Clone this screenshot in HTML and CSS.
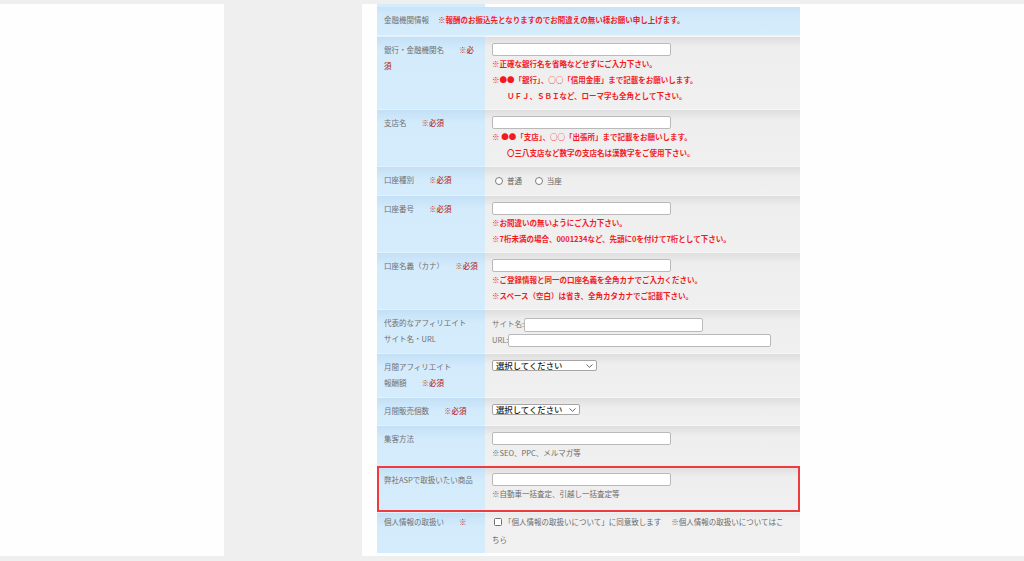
FILE: index.html
```html
<!DOCTYPE html>
<html lang="ja">
<head>
<meta charset="utf-8">
<title>金融機関情報</title>
<link rel="stylesheet" href="styles.css">
</head>
<body>
<div class="page">
  <aside class="side"></aside>
  <div class="gutter"></div>
  <main class="main">
    <div class="form">
      <div class="row row--stub"><div class="lbl"></div><div class="val val--blank"></div></div>

      <div class="row row--head">
        <span class="head-title">金融機関情報</span><span class="warn">※報酬のお振込先となりますのでお間違えの無い様お願い申し上げます。</span>
      </div>

      <div class="row">
        <div class="lbl">銀行・金融機関名　　<span class="req">※必須</span></div>
        <div class="val">
          <input class="txt" type="text">
          <p class="warn">※正確な銀行名を省略などせずにご入力下さい。</p>
          <p class="warn">※●●「銀行」、○○「信用金庫」まで記載をお願いします。</p>
          <p class="warn">　　ＵＦＪ、ＳＢＩなど、ローマ字も全角として下さい。</p>
        </div>
      </div>

      <div class="row">
        <div class="lbl">支店名　　<span class="req">※必須</span></div>
        <div class="val">
          <input class="txt" type="text">
          <p class="warn">※ ●●「支店」、○○「出張所」まで記載をお願いします。</p>
          <p class="warn">　　〇三八支店など数字の支店名は漢数字をご使用下さい。</p>
        </div>
      </div>

      <div class="row">
        <div class="lbl">口座種別　　<span class="req">※必須</span></div>
        <div class="val">
          <label class="opt"><input class="radio" type="radio" name="kind">普通</label>
          <label class="opt"><input class="radio" type="radio" name="kind">当座</label>
        </div>
      </div>

      <div class="row">
        <div class="lbl">口座番号　　<span class="req">※必須</span></div>
        <div class="val">
          <input class="txt" type="text">
          <p class="warn">※お間違いの無いようにご入力下さい。</p>
          <p class="warn">※7桁未満の場合、0001234など、先頭に0を付けて7桁として下さい。</p>
        </div>
      </div>

      <div class="row">
        <div class="lbl">口座名義（カナ）　　<span class="req">※必須</span></div>
        <div class="val">
          <input class="txt" type="text">
          <p class="warn">※ご登録情報と同一の口座名義を全角カナでご入力ください。</p>
          <p class="warn">※スペース（空白）は省き、全角カタカナでご記載下さい。</p>
        </div>
      </div>

      <div class="row">
        <div class="lbl">代表的なアフィリエイト<br>サイト名・URL</div>
        <div class="val">
          <p class="field">サイト名:<input class="txt txt--inline" type="text"></p>
          <p class="field">URL:<input class="txt txt--inline txt--url" type="text"></p>
        </div>
      </div>

      <div class="row">
        <div class="lbl">月間アフィリエイト<br>報酬額　　<span class="req">※必須</span></div>
        <div class="val">
          <span class="sel sel--wide"><select><option>選択してください</option></select><svg class="chev" viewBox="0 0 7 4" width="7" height="4"><polyline points="0.5,0.5 3.5,3.3 6.5,0.5" fill="none" stroke="#555" stroke-width="0.9"/></svg></span>
        </div>
      </div>

      <div class="row">
        <div class="lbl">月間販売個数　　<span class="req">※必須</span></div>
        <div class="val">
          <span class="sel sel--narrow"><select><option>選択してください</option></select><svg class="chev" viewBox="0 0 7 4" width="7" height="4"><polyline points="0.5,0.5 3.5,3.3 6.5,0.5" fill="none" stroke="#555" stroke-width="0.9"/></svg></span>
        </div>
      </div>

      <div class="row">
        <div class="lbl">集客方法</div>
        <div class="val">
          <input class="txt" type="text">
          <p class="note">※SEO、PPC、メルマガ等</p>
        </div>
      </div>

      <div class="row row--mark">
        <div class="lbl">弊社ASPで取扱いたい商品</div>
        <div class="val">
          <input class="txt" type="text">
          <p class="note">※自動車一括査定、引越し一括査定等</p>
        </div>
      </div>

      <div class="row row--agree">
        <div class="lbl">個人情報の取扱い　　<span class="req">※</span></div>
        <div class="val">
          <label class="agree"><input class="check" type="checkbox">「個人情報の取扱いについて」に同意致します<span class="gap"></span>※個人情報の取扱いについてはこちら</label>
        </div>
      </div>
    </div>
  </main>
</div>
</body>
</html>
```

FILE: styles.css
```css
html, body {
  margin: 0;
  padding: 0;
}

body {
  background: #efefef;
  font-family: "Noto Sans CJK JP", "Noto Sans", sans-serif;
  font-size: 7.5px;
  color: #666;
}

.page {
  display: flex;
  margin-top: 4px;
  height: 552px;
}

.side {
  width: 224px;
  background: #fefefe;
}

.gutter {
  width: 138px;
  background: #efefef;
}

.main {
  flex: 1;
  background: #fefefe;
  padding-left: 15px;
  overflow: hidden;
}

.form {
  width: 423px;
  display: flex;
  flex-direction: column;
}

.row {
  display: flex;
}

.lbl {
  width: 108px;
  box-sizing: border-box;
  flex: none;
  padding: 5px 7px 6px 7px;
  line-height: 16px;
  color: #707070;
  background: linear-gradient(#c4e0f6, #d4ebfc 14px, #d5ecfc);
  border-top: 1px solid #e2f1fd;
}

.val {
  flex: 1;
  min-width: 0;
  padding: 6px 10px 5px 7px;
  line-height: 16px;
  background: linear-gradient(#dedede, #eeeeee 10px, #f0f0f0);
  border-top: 1px solid #f6f6f6;
}

.row--stub .lbl,
.row--stub .val {
  height: 3px;
  padding: 0;
  border: 0;
}

.row--stub .lbl {
  background: #d5ecfc;
}

.val--blank {
  background: #fefefe;
}

.row--head {
  display: block;
  padding: 5px 7px 7px;
  line-height: 16px;
  background: linear-gradient(#c8e3f7, #d3eafb 10px, #d5ecfc);
  border-bottom: 1px solid #e6f3fd;
}

.head-title {
  color: #707070;
  margin-right: 9px;
}

p {
  margin: 0;
}

.warn {
  color: #f21b1b;
  font-weight: bold;
}

.req {
  color: #b8302a;
  font-weight: 500;
}

.note {
  color: #6a6a6a;
}

.txt {
  display: block;
  box-sizing: border-box;
  width: 179px;
  height: 13px;
  margin: 0;
  padding: 0 3px;
  border: 1px solid #b9b9b9;
  border-radius: 2px;
  background: #fff;
  font: inherit;
}

.txt--inline {
  display: inline-block;
  vertical-align: middle;
  height: 14px;
}

.txt--url {
  width: 263px;
  height: 13px;
}

.field {
  color: #777;
  line-height: 16px;
}

.opt {
  display: inline-flex;
  align-items: center;
  margin-right: 8px;
  color: #666;
}

.radio {
  appearance: none;
  -webkit-appearance: none;
  box-sizing: border-box;
  width: 8px;
  height: 8px;
  margin: 0 4px 0 3px;
  border: 1px solid #7d7d7d;
  border-radius: 50%;
  background: #fff;
}

.sel {
  position: relative;
  display: inline-block;
  vertical-align: top;
}

.sel select {
  appearance: none;
  -webkit-appearance: none;
  display: block;
  box-sizing: border-box;
  height: 11px;
  margin: 0;
  padding: 0 3px;
  border: 1px solid #a5a5a5;
  border-radius: 2px;
  background: #fff;
  font-family: "Noto Sans CJK JP", "Noto Sans", sans-serif;
  font-size: 8.4px;
  font-weight: 500;
  line-height: 9px;
  color: #1e1e1e;
}

.sel--wide select {
  width: 105px;
}

.sel--narrow select {
  width: 88px;
}

.chev {
  position: absolute;
  right: 4px;
  top: 3.5px;
  pointer-events: none;
}

.row--mark {
  outline: 2px solid #ee3b40;
  outline-offset: -2px;
  position: relative;
}

.row--mark .val {
  padding-bottom: 10px;
}

.row--agree .lbl {
  padding-top: 0;
  line-height: 18px;
}

.row--agree .val {
  padding-top: 0;
  padding-right: 12px;
  padding-bottom: 4px;
  line-height: 18px;
  background: linear-gradient(#e9e9e9, #f0f0f0 6px, #f1f1f1);
}

.agree {
  color: #6a6a6a;
}

.check {
  appearance: none;
  -webkit-appearance: none;
  box-sizing: border-box;
  width: 8px;
  height: 8px;
  margin: 0 2px 0 2px;
  vertical-align: -1px;
  border: 1px solid #6f6f6f;
  border-radius: 1.5px;
  background: #fff;
}

.gap {
  display: inline-block;
  width: 10px;
}
```
